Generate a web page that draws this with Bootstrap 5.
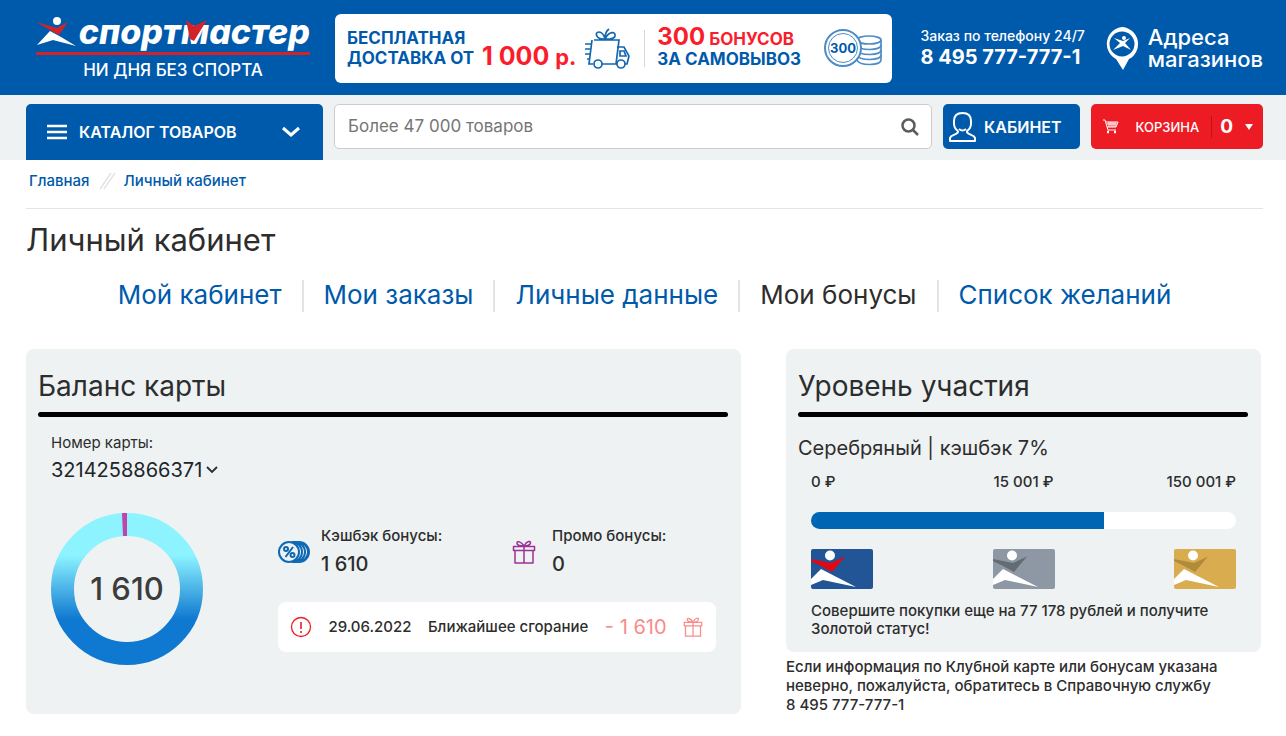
<!DOCTYPE html>
<html lang="ru">
<head>
<meta charset="utf-8">
<meta name="viewport" content="width=device-width, initial-scale=1">
<title>Личный кабинет</title>
<link rel="stylesheet" href="https://cdn.jsdelivr.net/npm/bootstrap@5.3.0/dist/css/bootstrap.min.css">
<style>
:root { --sm-blue: #005aab; --sm-red: #ed1c24; --sm-pale: #eef2f3; }
body { font-family: Inter, sans-serif; font-size: 15px; line-height: 18px; color: #2d2d2d; }
a { color: var(--sm-blue); text-decoration: none; }
.page-x { padding-left: 26px; padding-right: 23px; }
.top-bar { background: var(--sm-blue); min-height: 95px; padding-top: 1px; }
.brand { width: 274px; margin: 0 25px 0 10px; }
.brand-name { font: italic 800 34px/32px Inter, sans-serif; border-bottom: 3px solid #d2232a; padding-bottom: 4px; }
.brand-m svg { left: 2px; top: 8px; }
.brand-line { font: 500 17px/22px Inter, sans-serif; }
.promo { height: 69px; color: var(--sm-blue); font-weight: 700; }
.promo-text { font-size: 17px; line-height: 20px; }
.promo-big { font-size: 24px; line-height: 20px; color: #fa1e2d; }
.promo-price { font-size: 25px; line-height: 30px; color: #fa1e2d; }
.promo-red { color: #fa1e2d; }
.promo-rule { width: 1px; height: 37px; background: #d5d8dc; }
.phone-label { font-size: 14px; font-weight: 500; }
.phone-num { font-size: 20px; line-height: 24px; font-weight: 700; }
.shops { font-size: 22px; line-height: 22px; font-weight: 500; }
.tool-bar { background: var(--sm-pale); height: 65px; padding-top: 9px; gap: 11px; }
.catalog { width: 297px; height: 56px; background: var(--sm-blue); border-radius: 5px 5px 0 0; font-size: 16px; font-weight: 600; padding: 0 22px 0 20px; }
.search-box { height: 45px; border: 1px solid #ccc; border-radius: 5px; background: #fff; }
.search-box input { font-size: 17px; padding: 0 13px; }
.search-box input::placeholder { color: #757575; }
.tool-btn { height: 45px; border: 0; border-radius: 5px; color: #fff; }
.btn-cab { width: 137px; background: var(--sm-blue); font-size: 16px; font-weight: 600; padding: 0 6px; }
.btn-cart { width: 172px; background: var(--sm-red); font-size: 13px; font-weight: 500; padding: 0 10px 0 12px; }
.cart-rule { width: 1px; height: 22px; background: #b9151c; }
.cart-num { font-size: 19px; font-weight: 700; }
.crumbs { height: 49px; border-bottom: 1px solid #e4e4e4; font-weight: 500; padding: 12px 3px 0; }
.page-title { font-size: 31px; line-height: 34px; font-weight: 400; margin: 14px 0 23px; }
.tabs { font-size: 26px; line-height: 32px; margin-bottom: 37px; }
.tabs li { padding: 0 20px; }
.tabs li + li { border-left: 2px solid #e2e4e6; }
.tabs a { display: block; line-height: 30px; padding-bottom: 2px; }
.boards { display: grid; grid-template-columns: 715fr 475fr; gap: 45px; padding-right: 2px; }
.panel { background: var(--sm-pale); border-radius: 8px; padding: 20px 13px 0 12px; }
.panel h2 { font-size: 28px; line-height: 34px; font-weight: 400; margin: 0; padding-bottom: 9px; }
.thick { height: 5px; border-radius: 3px; background: #000; }
.sum { font-size: 20px; line-height: 26px; }
.note { font-weight: 500; }
.inner { padding: 17px 12px 48px 13px; }
.card-pick { margin-top: 5px; }
.bonus-row { margin-top: 30px; }
.bonus-info { margin-left: 75px; padding-top: 14px; }
.ring-sum { font-size: 31px; font-weight: 500; color: #3c3c3c; }
.kinds { margin-bottom: 25px; }
.kind:first-child { flex: 0 0 230px; }
.kind-icon { margin-right: 11px; }
.kind:last-child .kind-icon { margin: 0 16px 0 4px; }
.kind-sum { margin-top: 6px; font-weight: 500; }
.burn { height: 50px; border-radius: 8px; padding: 0 13px 0 12px; }
.faded { color: #f98b8b; }
.level-name { font-size: 20px; line-height: 24px; margin-top: 19px; }
.level-body { padding: 13px 12px 14px 13px; }
.level-marks span { flex: 1 1 0; }
.level-bar { height: 17px; border-radius: 9px; background: #fff; margin: 21px 0 20px; }
.level-bar .progress-bar { background: #0066b3; }
.level-hint { margin: 13px 0 0; }
.help { line-height: 19px; margin: 5px 0 0; }
</style>
</head>
<body>
<svg width="0" height="0" class="position-absolute" aria-hidden="true">
  <symbol id="gift" viewBox="0 0 24 24"><g fill="none" stroke="currentColor" stroke-width="1.5" stroke-linejoin="round"><path d="M1.500 6.500h21v4h-21zM3 10.500h18V23H3zM12 6.500V23M12 6C9 1.500 5 .5 5 3s3 3 7 3M12 6C15 .5 19 .5 18.500 3S15 6 12 6"/></g></symbol>
</svg>

<header class="top-bar page-x d-flex align-items-center text-white">
  <a href="#" class="brand text-white flex-shrink-0 text-center">
    <span class="brand-name d-flex align-items-center justify-content-between">
      <svg width="40" height="29" viewBox="0 0 40 29"><circle cx="21" cy="4" r="4" fill="#fff"/><path d="M0 5l21 6 11-6-9 13-9-5z" fill="#d2232a"/><path d="M1 28l13-14 11 6 15 9-23-6z" fill="#fff"/></svg>
      <span>спорт<span class="brand-m position-relative">м<svg class="position-absolute" width="26" height="24" viewBox="0 0 26 24"><path d="M3 1l8 6L24 1 11 22 7 20z" fill="#d2232a"/></svg></span>астер</span>
    </span>
    <span class="brand-line d-block mt-1">НИ ДНЯ БЕЗ СПОРТА</span>
  </a>
  <a href="#" class="promo bg-white rounded flex-grow-1 d-flex align-items-center text-nowrap">
    <span class="promo-text ps-2 ms-1">БЕСПЛАТНАЯ<br>ДОСТАВКА ОТ</span>
    <span class="promo-price ps-2 pt-3">1 000 <small>р.</small></span>
    <svg class="ms-2 me-2" width="48" height="42" viewBox="0 0 48 42" fill="none" stroke="#1267b0" stroke-width="1.700"><path d="M10 13h25l-3 24H18M9 37H5l3-24M1 17h7M1 22h6M1 27h5M3 32h3M33 20h7l5 9-2 8h-2M36 24h4l2 5h-6zM30 37h3M21 12c-9 1-11-7-6-7 4 0 6 7 6 7 4-8 11-8 10-3-1 4-10 3-10 3M21 11q0-6 4-9"/><circle cx="14" cy="37" r="4"/><circle cx="37" cy="37" r="4"/></svg>
    <span class="promo-rule ms-1 me-2"></span>
    <span class="promo-text ms-1"><span class="promo-big">300</span> <span class="promo-red">БОНУСОВ</span><br>ЗА САМОВЫВОЗ</span>
    <svg class="ms-auto me-2" width="60" height="40" viewBox="0 0 60 40"><g fill="#fff" stroke="#4d8cc5" stroke-width="1.700"><path d="M33 12v20c2 6 24 6 24 0V12"/><path d="M33 27c2 6 24 6 24 0M33 22c2 6 24 6 24 0M33 17c2 6 24 6 24 0"/><ellipse cx="45" cy="12" rx="12" ry="4"/><circle cx="19" cy="20" r="18" stroke-width="2"/><circle cx="19" cy="20" r="14.500" stroke-width="1"/></g><text x="19" y="25" text-anchor="middle" font-size="13" font-weight="700" fill="#005aab">300</text></svg>
  </a>
  <div class="text-nowrap ms-4 ps-1 me-3">
    <div class="phone-label">Заказ по телефону 24/7</div>
    <div class="phone-num">8 495 777-777-1</div>
  </div>
  <a href="#" class="shops text-white d-flex align-items-center flex-shrink-0 ms-1">
    <svg class="me-2" width="35" height="43" viewBox="0 0 35 43"><path d="M17 0a17 17 0 0 1 7 32l-6 11-7-11A17 17 0 0 1 17 0z" fill="#fff"/><circle cx="17" cy="17" r="12.500" fill="#005aab"/><circle cx="19" cy="11" r="2" fill="#fff"/><path d="M9 11l9 3 7-3-5 5 6 7-8-4-10 4 7-7z" fill="#fff"/></svg>
    <span>Адреса<br>магазинов</span>
  </a>
</header>

<div class="tool-bar page-x d-flex align-items-start">
  <button type="button" class="catalog btn text-white d-flex align-items-center flex-shrink-0">
    <svg class="me-2" width="20" height="16" viewBox="0 0 20 16" stroke="#fff" stroke-width="2.500"><path d="M0 2h20M0 8h20M0 14h20"/></svg>
    <span class="ms-1">КАТАЛОГ ТОВАРОВ</span>
    <svg class="ms-auto" width="18" height="12" viewBox="0 0 18 12" fill="none" stroke="#fff" stroke-width="3"><path d="M1 2l8 7 8-7"/></svg>
  </button>
  <form class="search-box d-flex align-items-center flex-grow-1 pe-2" role="search">
    <input type="search" class="form-control border-0 bg-transparent shadow-none" placeholder="Более 47 000 товаров" aria-label="Поиск">
    <button type="button" class="btn p-0 border-0 me-1 d-flex" aria-label="Найти"><svg width="18" height="18" viewBox="0 0 18 18" fill="none" stroke="#5c5c5c" stroke-width="2.500"><circle cx="7.500" cy="7.500" r="6"/><path d="M12 12l5 5"/></svg></button>
  </form>
  <button type="button" class="tool-btn btn-cab d-flex align-items-center flex-shrink-0">
    <svg class="me-2" width="27" height="30" viewBox="0 0 27 30" fill="none" stroke="#fff" stroke-width="2" stroke-linejoin="round"><path d="M9 19C4 16 5 11 5 9 5 4 8 1 13.500 1S22 4 22 9c0 2 1 7-4 10-1 4 7 3 8 7v3H1v-3c1-4 9-3 8-7M10 17q3.500 3 7 0"/></svg>
    <span>КАБИНЕТ</span>
  </button>
  <button type="button" class="tool-btn btn-cart d-flex align-items-center flex-shrink-0">
    <svg width="16" height="15" viewBox="0 0 16 15" fill="none" stroke="#fff"><path d="M0 1h2l3 10h8M3 3h12l-2 5H4M4 5h10M6 3v5M8 3v5M10 3v5M12 3v5"/><path d="M4 13h2M11 13h2" stroke-width="2.500"/></svg>
    <span class="ms-auto me-2 pe-1">КОРЗИНА</span><span class="cart-rule"></span>
    <span class="cart-num mx-2">0</span>
    <svg class="ms-1" width="8" height="6"><path d="M0 0h8L4 6z" fill="#fff"/></svg>
  </button>
</div>

<main class="page-x">
  <nav class="crumbs d-flex" aria-label="Навигация"><a href="#">Главная</a>
    <svg class="mx-2" width="18" height="18" viewBox="0 0 18 18" stroke="#e4e4e4" stroke-width="1.500"><path d="M2 17L13 1M6 17L17 1"/></svg>
    <a href="#">Личный кабинет</a></nav>
  <h1 class="page-title">Личный кабинет</h1>
  <ul class="tabs list-unstyled d-flex justify-content-center text-nowrap">
    <li><a href="#">Мой кабинет</a></li><li><a href="#">Мои заказы</a></li><li><a href="#">Личные данные</a></li><li><a href="#" class="text-reset" aria-current="page">Мои бонусы</a></li><li><a href="#">Список желаний</a></li>
  </ul>

  <div class="boards">
    <section class="panel">
      <h2>Баланс карты</h2>
      <div class="thick"></div>
      <div class="inner">
        <div>Номер карты:</div>
        <button type="button" class="card-pick sum btn p-0 border-0 d-flex align-items-center"><span>3214258866371</span>
          <svg class="ms-1" width="12" height="8" viewBox="0 0 12 8" fill="none" stroke="#2d2d2d" stroke-width="1.800"><path d="M1 1l5 5 5-5"/></svg></button>
        <div class="bonus-row d-flex">
          <div class="position-relative flex-shrink-0">
            <svg class="d-block" width="152" height="152" viewBox="0 0 152 152"><defs><linearGradient id="sea" x1="0" y1="0" x2="0" y2="152" gradientUnits="userSpaceOnUse"><stop offset=".28" stop-color="#8cf3ff"/><stop offset=".7" stop-color="#0f78d0"/></linearGradient></defs><circle cx="76" cy="76" r="64.500" fill="none" stroke="url(#sea)" stroke-width="23"/><path d="M71 0h5v23h-4z" fill="#c043ae"/></svg>
            <div class="ring-sum position-absolute top-50 start-50 translate-middle text-nowrap">1 610</div>
          </div>
          <div class="flex-grow-1 bonus-info">
            <div class="kinds d-flex">
              <div class="kind d-flex align-items-center"><svg class="kind-icon" width="32" height="24" viewBox="0 0 32 24" fill="none" stroke="#0f69b4" stroke-width="2"><path d="M20 2a10 10 0 0 1 0 20M17 2a10 10 0 0 1 0 20M14 2a10 10 0 0 1 0 20M14 2h7a10 10 0 0 1 0 20h-7"/><circle cx="11" cy="12" r="10" fill="#eef2f3"/><circle cx="8" cy="9" r="2"/><circle cx="14.500" cy="15" r="2"/><path d="M15 7L7.500 17"/></svg>
                <div><div class="note">Кэшбэк бонусы:</div><div class="kind-sum sum">1 610</div></div></div>
              <div class="kind d-flex align-items-center"><svg class="kind-icon" width="24" height="24" color="#9c3293"><use href="#gift"/></svg>
                <div><div class="note">Промо бонусы:</div><div class="kind-sum sum">0</div></div></div>
            </div>
            <div class="burn bg-white d-flex align-items-center justify-content-between text-nowrap">
              <svg width="22" height="22" viewBox="0 0 22 22" fill="none" stroke="#ed1c24" stroke-width="1.300"><circle cx="11" cy="11" r="9.500"/><path d="M11 6v7M11 15v2" stroke-width="1.600"/></svg>
              <span class="note">29.06.2022</span><span class="note">Ближайшее сгорание</span><span class="sum faded">- 1 610</span>
              <svg class="faded" width="20" height="20"><use href="#gift"/></svg>
            </div>
          </div>
        </div>
      </div>
    </section>

    <div>
      <section class="panel">
        <h2>Уровень участия</h2>
        <div class="thick"></div>
        <div class="level-name">Серебряный | кэшбэк 7%</div>
        <div class="level-body">
          <div class="level-marks note d-flex"><span>0 ₽</span><span class="text-center">15 001 ₽</span><span class="text-end">150 001 ₽</span></div>
          <div class="progress level-bar" role="progressbar" aria-label="Уровень" aria-valuenow="69" aria-valuemin="0" aria-valuemax="100"><div class="progress-bar" style="width:69%"></div></div>
          <div class="d-flex justify-content-between">
            <svg width="62" height="40" viewBox="0 0 62 40"><rect width="62" height="40" rx="2" fill="#225596"/><circle cx="19" cy="6.500" r="5" fill="#fff"/><path d="M0 10l20 4L34 7.500 21 23 10 17 0 12z" fill="#e30613"/><path d="M0 30L10 20l35 18-33-7-12 5z" fill="#fff"/></svg>
            <svg width="62" height="40" viewBox="0 0 62 40"><rect width="62" height="40" rx="2" fill="#8e98a4"/><circle cx="19" cy="6.500" r="5" fill="#fff"/><path d="M0 10l20 4L34 7.500 21 23 10 17 0 12z" fill="#626d73"/><path d="M0 30L10 20l35 18-33-7-12 5z" fill="#fff"/></svg>
            <svg width="62" height="40" viewBox="0 0 62 40"><rect width="62" height="40" rx="2" fill="#d9ad4f"/><circle cx="19" cy="6.500" r="5" fill="#fff"/><path d="M0 10l20 4L34 7.500 21 23 10 17 0 12z" fill="#b18b3c"/><path d="M0 30L10 20l35 18-33-7-12 5z" fill="#fff"/></svg>
          </div>
          <p class="note level-hint">Совершите покупки еще на 77 178 рублей и получите Золотой статус!</p>
        </div>
      </section>
      <p class="note help">Если информация по Клубной карте или бонусам указана неверно, пожалуйста, обратитесь в Справочную службу<br>8 495 777-777-1</p>
    </div>
  </div>
</main>
<script src="https://cdn.jsdelivr.net/npm/bootstrap@5.3.0/dist/js/bootstrap.bundle.min.js"></script>
</body>
</html>
